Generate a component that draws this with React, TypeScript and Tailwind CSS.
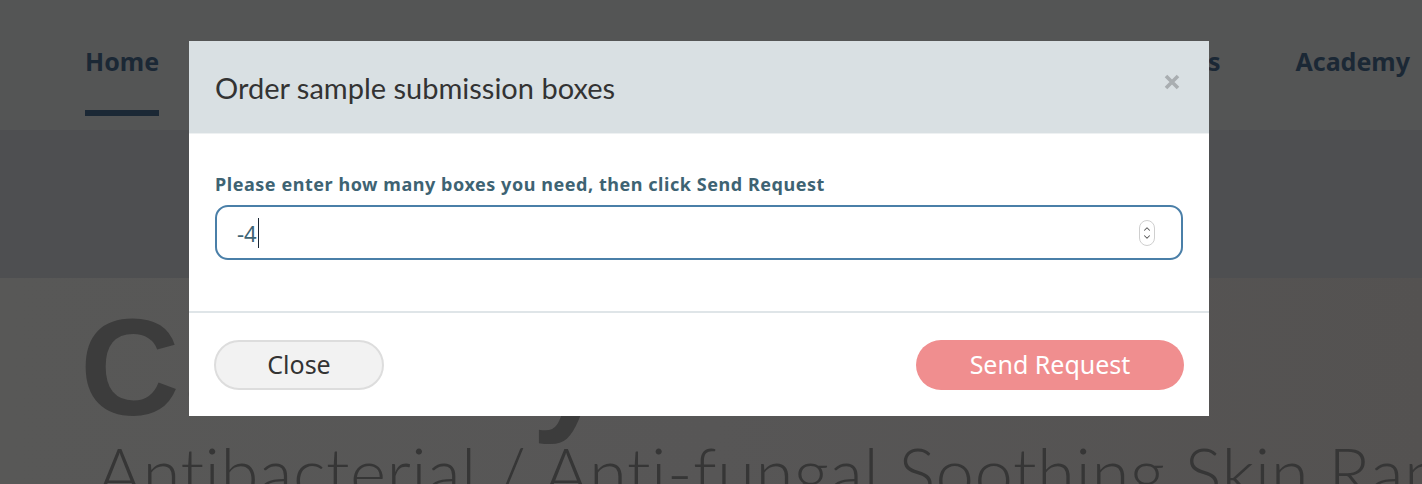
import { ChevronDown, ChevronUp } from "lucide-react";

const navItems = ["Diagnostics", "Pricing", "Support"];

function CloseIcon() {
  return (
    <svg width="16" height="16" viewBox="0 0 16 16" aria-hidden="true">
      <path d="M2 2 L14 14 M14 2 L2 14" stroke="#a9aeb1" strokeWidth="3.6" strokeLinecap="butt" />
    </svg>
  );
}

function NumberSpinner() {
  return (
    <div className="flex h-[26px] w-[16px] flex-col items-center justify-center rounded-full border border-[#cfcfcf] bg-white text-[#555]">
      <ChevronUp size={10} strokeWidth={2.5} className="-mb-[2px]" />
      <ChevronDown size={10} strokeWidth={2.5} />
    </div>
  );
}

export default function App() {
  return (
    <div className="relative h-[484px] w-[1422px] overflow-hidden bg-[#575655] font-['Noto_Sans',sans-serif]">
      <header className="flex h-[130px] bg-[#545555] pl-[85px] pr-[12px] pt-[42px]">
        <div className="flex flex-col items-start">
          <span className="text-[25px] font-bold leading-[38px] text-[#1b2835]">Home</span>
          <span className="mt-[30px] h-[6px] w-[74px] bg-[#1b2835]" />
        </div>
        <div className="flex flex-1 justify-center gap-[75px] text-[25px] font-bold leading-[38px] text-[#1b2835]">
          {navItems.map((item) => (
            <span key={item}>{item}</span>
          ))}
        </div>
        <div className="flex gap-[75px] text-[25px] font-bold leading-[38px] text-[#1b2835]">
          <span>Resources</span>
          <span>Academy</span>
        </div>
      </header>

      <div className="h-[148px] bg-[#4e4f51]" />

      <section className="h-[206px] bg-gradient-to-r from-[#585857] via-[#575656] to-[#545251] pl-[80px] pt-[20px]">
        <h1 className="whitespace-nowrap font-['Liberation_Sans',sans-serif] text-[138px] font-bold leading-[138px] tracking-[5px] text-[#3c3c3c]">
          Canisty Pet Duo
        </h1>
        <p className="mt-[1px] whitespace-nowrap pl-[17px] font-['Lato',sans-serif] text-[69px] font-light leading-[69px] tracking-[0.5px] text-[#363636]">
          Antibacterial / Anti-fungal Soothing Skin Range
        </p>
      </section>

      <div className="absolute left-[189px] top-[41px] w-[1020px] bg-white">
        <div className="flex h-[93px] items-center justify-between border-b border-[#eef1f2] bg-[#d9e0e3] pl-[26px] pr-[29px]">
          <h2 className="font-['Lato',sans-serif] text-[29px] leading-none text-[#333]">Order sample submission boxes</h2>
          <button type="button" className="mt-[-10px]">
            <CloseIcon />
          </button>
        </div>

        <div className="px-[26px] pb-[51px] pt-[38px]">
          <label className="block text-[18px] font-bold leading-[24px] tracking-[0.55px] text-[#3e6373]">
            Please enter how many boxes you need, then click Send Request
          </label>
          <div className="mt-[9px] flex h-[55px] items-center rounded-[13px] border-2 border-[#4a7fa8] pl-[20px] pr-[26px]">
            <span className="text-[22px] leading-none text-[#3e6474]">-4</span>
            <span className="ml-[1px] h-[30px] w-[1.5px] bg-[#1b2835]" />
            <div className="ml-auto">
              <NumberSpinner />
            </div>
          </div>
        </div>

        <div className="flex items-center justify-between border-t-2 border-[#dfe5e8] px-[25px] pb-[26px] pt-[27px]">
          <button
            type="button"
            className="h-[50px] w-[170px] rounded-full border-2 border-[#dddddd] bg-[#f2f2f2] text-[25px] text-[#333]"
          >
            Close
          </button>
          <button
            type="button"
            className="h-[50px] w-[268px] rounded-full bg-[#f08e8f] text-[25px] text-white"
          >
            Send Request
          </button>
        </div>
      </div>
    </div>
  );
}
